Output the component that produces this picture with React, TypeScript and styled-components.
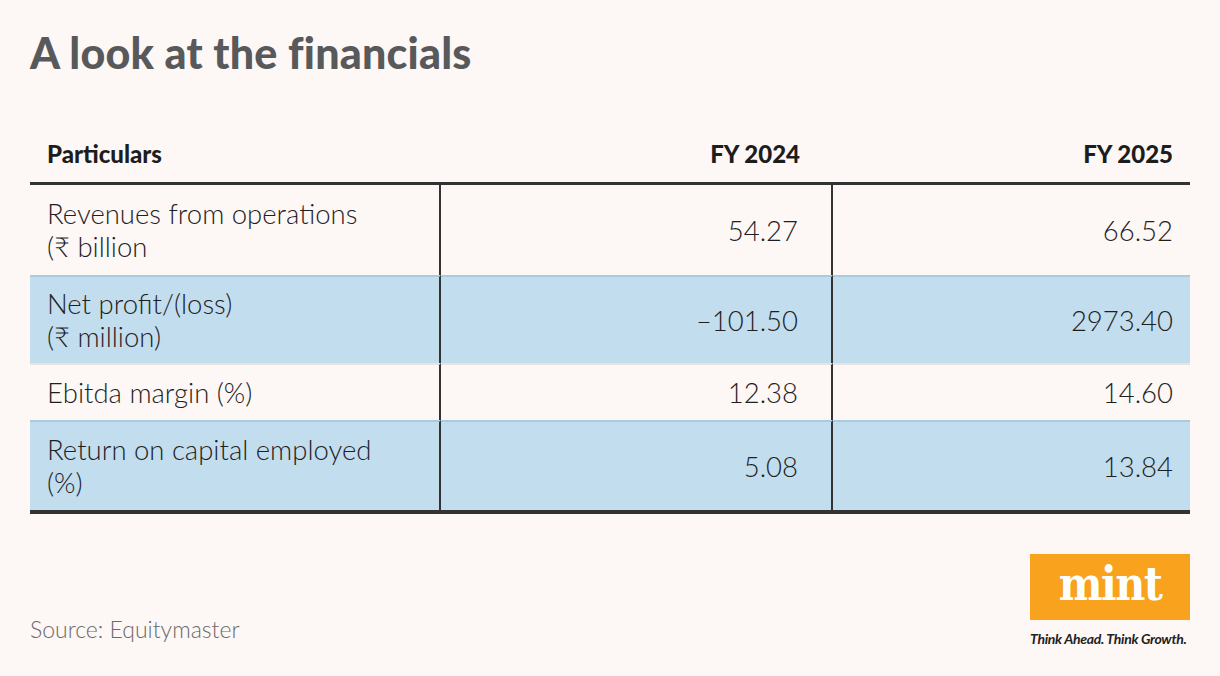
import React from 'react'
import styled, { createGlobalStyle } from 'styled-components'

const GlobalStyle = createGlobalStyle`
    html, body {
        margin: 0;
        padding: 0;
        background: #fdf7f6;
    }
`

const Page = styled.div`
    width: 1220px;
    height: 676px;
    box-sizing: border-box;
    padding: 24px 30px 0 30px;
    background: #fdf7f6;
    font-family: Lato, 'Open Sans', sans-serif;
    display: flex;
    flex-direction: column;
`

const Title = styled.h1`
    margin: 0;
    font-size: 43px;
    line-height: 58px;
    font-weight: 900;
    color: #58595b;
    letter-spacing: 0.2px;
`

const Table = styled.div`
    margin-top: 42px;
    width: 1160px;
    display: grid;
    grid-template-columns: 411px 392px 357px;
    border-bottom: 4px solid #333;
`

const HeadCell = styled.div<{ $right?: boolean; $pad: number }>`
    height: 58px;
    display: flex;
    align-items: center;
    justify-content: ${p => (p.$right ? 'flex-end' : 'flex-start')};
    padding: 0 ${p => (p.$right ? p.$pad : 0)}px 0 ${p => (p.$right ? 0 : 17)}px;
    font-size: 24px;
    font-weight: 900;
    color: #1d1d1d;
    border-bottom: 3px solid #333;
`

const Cell = styled.div<{ $blue: boolean; $right?: boolean; $pad: number; $divider?: boolean; $h: number; $top?: boolean }>`
    box-sizing: border-box;
    height: ${p => p.$h}px;
    display: flex;
    align-items: center;
    justify-content: ${p => (p.$right ? 'flex-end' : 'flex-start')};
    padding: 0 ${p => (p.$right ? p.$pad : 0)}px 0 ${p => (p.$right ? 0 : 17)}px;
    background: ${p => (p.$blue ? '#c2ddee' : '#fdf7f6')};
    border-top: ${p => (p.$top ? 'none' : p.$blue ? '2px solid #a9cbe0' : '2px solid #e9e2e2')};
    border-right: ${p => (p.$divider ? '2px solid #333' : 'none')};
    font-size: 27.5px;
    line-height: 33px;
    font-weight: 300;
    color: #1f1f1f;
`

const Footer = styled.div`
    margin-top: 40px;
    display: flex;
    justify-content: space-between;
    align-items: flex-end;
    width: 1160px;
`

const Source = styled.div`
    font-size: 23px;
    font-weight: 300;
    color: #6a6a6a;
    padding-bottom: 4px;
`

const Logo = styled.div`
    display: flex;
    flex-direction: column;
    align-items: stretch;
    width: 160px;
`

const LogoBox = styled.div`
    height: 66px;
    background: #f8a21e;
    display: flex;
    align-items: center;
    justify-content: center;
    color: #fff;
    font-family: 'DejaVu Serif', serif;
    font-stretch: condensed;
    font-weight: 700;
    font-size: 46px;
    letter-spacing: -1.5px;
    padding-bottom: 6px;
    box-sizing: border-box;
`

const Tagline = styled.div`
    margin-top: 10px;
    font-size: 14px;
    font-style: italic;
    font-weight: 700;
    color: #222;
    white-space: nowrap;
    letter-spacing: -0.3px;
`

const rows = [
    { label: ['Revenues from operations', '(₹ billion'], a: '54.27', b: '66.52', h: 90 },
    { label: ['Net profit/(loss)', '(₹ million)'], a: '–101.50', b: '2973.40', h: 88 },
    { label: ['Ebitda margin (%)'], a: '12.38', b: '14.60', h: 57 },
    { label: ['Return on capital employed', '(%)'], a: '5.08', b: '13.84', h: 90 },
]

export default function App() {
    return (
        <Page>
            <GlobalStyle />
            <Title>A look at the financials</Title>

            <Table>
                <HeadCell $pad={0}>Particulars</HeadCell>
                <HeadCell $right $pad={33}>FY 2024</HeadCell>
                <HeadCell $right $pad={17}>FY 2025</HeadCell>

                {rows.map((r, i) => {
                    const blue = i % 2 === 1
                    return (
                        <React.Fragment key={i}>
                            <Cell $blue={blue} $pad={0} $divider $h={r.h} $top={i === 0}>
                                <div>
                                    {r.label.map((l, j) => (
                                        <div key={j}>{l}</div>
                                    ))}
                                </div>
                            </Cell>
                            <Cell $blue={blue} $right $pad={33} $divider $h={r.h} $top={i === 0}>{r.a}</Cell>
                            <Cell $blue={blue} $right $pad={17} $h={r.h} $top={i === 0}>{r.b}</Cell>
                        </React.Fragment>
                    )
                })}
            </Table>

            <Footer>
                <Source>Source: Equitymaster</Source>
                <Logo>
                    <LogoBox>mint</LogoBox>
                    <Tagline>Think Ahead. Think Growth.</Tagline>
                </Logo>
            </Footer>
        </Page>
    )
}
